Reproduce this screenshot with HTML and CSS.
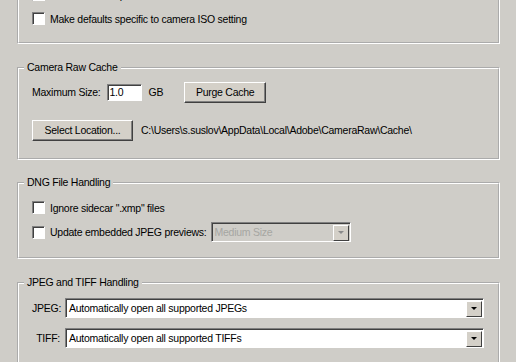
FILE: index.html
```html
<!DOCTYPE html>
<html lang="en">
<head>
    <meta charset="UTF-8">
    <title>Camera Raw Preferences</title>
    <link rel="stylesheet" href="styles.css">
</head>
<body>

<div class="panel">

    <!-- defaults (scrolled partly out of view) -->
    <fieldset class="group group-defaults">
        <div class="check-row">
            <span class="checkbox"></span>
            <span>Make defaults specific to camera serial number</span>
        </div>
        <div class="check-row">
            <span class="checkbox"></span>
            <span>Make defaults specific to camera ISO setting</span>
        </div>
    </fieldset>

    <!-- cache -->
    <fieldset class="group group-cache">
        <legend>Camera Raw Cache</legend>
        <div class="row">
            <span>Maximum Size:</span>
            <span class="textbox">1.0</span>
            <span class="unit">GB</span>
            <button type="button" class="btn btn-purge">Purge Cache</button>
        </div>
        <div class="row row-location">
            <button type="button" class="btn btn-location">Select Location...</button>
            <span class="path">C:\Users\s.suslov\AppData\Local\Adobe\CameraRaw\Cache\</span>
        </div>
    </fieldset>

    <!-- dng -->
    <fieldset class="group group-dng">
        <legend>DNG File Handling</legend>
        <div class="check-row">
            <span class="checkbox"></span>
            <span>Ignore sidecar ".xmp" files</span>
        </div>
        <div class="check-row check-row-select">
            <span class="checkbox"></span>
            <span>Update embedded JPEG previews:</span>
            <div class="dropdown dropdown-disabled">
                <span class="dropdown-value">Medium Size</span>
                <span class="dropdown-arrow"></span>
            </div>
        </div>
    </fieldset>

    <!-- jpeg / tiff -->
    <fieldset class="group group-jpeg">
        <legend>JPEG and TIFF Handling</legend>
        <div class="row">
            <span class="field-label">JPEG:</span>
            <div class="dropdown dropdown-wide">
                <span class="dropdown-value">Automatically open all supported JPEGs</span>
                <span class="dropdown-arrow"></span>
            </div>
        </div>
        <div class="row row-tiff">
            <span class="field-label">TIFF:</span>
            <div class="dropdown dropdown-wide">
                <span class="dropdown-value">Automatically open all supported TIFFs</span>
                <span class="dropdown-arrow"></span>
            </div>
        </div>
    </fieldset>

</div>

</body>
</html>
```

FILE: styles.css
```css
body {
    margin: 0;
    background: #cfcdc8;
    font-family: 'Liberation Sans', Arial, sans-serif;
    font-size: 10.5px;
    letter-spacing: -0.25px;
    color: #000;
    overflow: hidden;
    height: 362px;
}

.panel {
    padding-left: 17px;
    width: 483px;
}

.group {
    margin: 0;
    padding: 0 13px;
    border: 2px groove #fff;
    min-width: 0;
}

.group legend {
    margin-left: -8px;
    padding: 0 3px;
    line-height: 13px;
}

.group-defaults {
    margin-top: -20px;
    padding-top: 6px;
    padding-bottom: 17px;
}

.group-cache {
    margin-top: 17px;
    padding-top: 8px;
    padding-bottom: 18px;
}

.group-dng {
    margin-top: 16px;
    padding-top: 12px;
    padding-bottom: 15px;
}

.group-jpeg {
    margin-top: 17px;
    padding-top: 9px;
    padding-bottom: 20px;
}

.check-row {
    display: flex;
    align-items: center;
    height: 13px;
    margin-bottom: 11px;
}

.check-row:last-child {
    margin-bottom: 0;
}

.check-row-select {
    height: 20px;
    margin-top: -3px;
}

.checkbox {
    width: 11px;
    height: 11px;
    background: #fff;
    border: 1px solid;
    border-color: #808080 #fff #fff #808080;
    box-shadow: inset 1px 1px #404040;
    margin-right: 5px;
    flex-shrink: 0;
}

.row {
    display: flex;
    align-items: center;
    height: 20px;
}

.row-location {
    margin-top: 18px;
}

.row-tiff {
    margin-top: 10px;
}

.textbox {
    width: 31px;
    height: 15px;
    line-height: 15px;
    padding-left: 2px;
    margin-left: 6px;
    background: #fff;
    border: 1px solid;
    border-color: #808080 #fff #fff #808080;
    box-shadow: inset 1px 1px #404040;
}

.unit {
    margin-left: 7px;
}

.btn {
    height: 21px;
    padding: 0;
    font: inherit;
    letter-spacing: inherit;
    color: #000;
    background: #d4d0c8;
    border: 1px solid;
    border-color: #fff #404040 #404040 #fff;
    box-shadow: inset -1px -1px #808080;
}

.btn-purge {
    width: 82px;
    margin-left: 21px;
}

.btn-location {
    width: 101px;
}

.path {
    margin-left: 8px;
}

.dropdown {
    display: flex;
    align-items: center;
    height: 16px;
    padding: 1px;
    background: #fff;
    border: 1px solid;
    border-color: #808080 #fff #fff #808080;
    box-shadow: inset 1px 1px #404040;
}

.dropdown-value {
    flex: 1;
    padding-left: 2px;
    white-space: nowrap;
    overflow: hidden;
}

.dropdown-arrow {
    width: 14px;
    height: 14px;
    margin: 1px 0 0 1px;
    background: #d4d0c8;
    border: 1px solid;
    border-color: #fff #404040 #404040 #fff;
    display: flex;
    align-items: center;
    justify-content: center;
}

.dropdown-arrow::after {
    content: "";
    border-left: 3px solid transparent;
    border-right: 3px solid transparent;
    border-top: 3px solid #000;
}

.dropdown-disabled {
    width: 136px;
    margin-left: 4px;
    background: #cfcdc8;
}

.dropdown-disabled .dropdown-value {
    color: #a6a6a2;
}

.dropdown-disabled .dropdown-arrow::after {
    border-top-color: #8a8a8a;
}

.field-label {
    width: 28px;
    text-align: right;
    margin-right: 5px;
}

.dropdown-wide {
    flex: 1;
    margin-right: 1px;
}
```
